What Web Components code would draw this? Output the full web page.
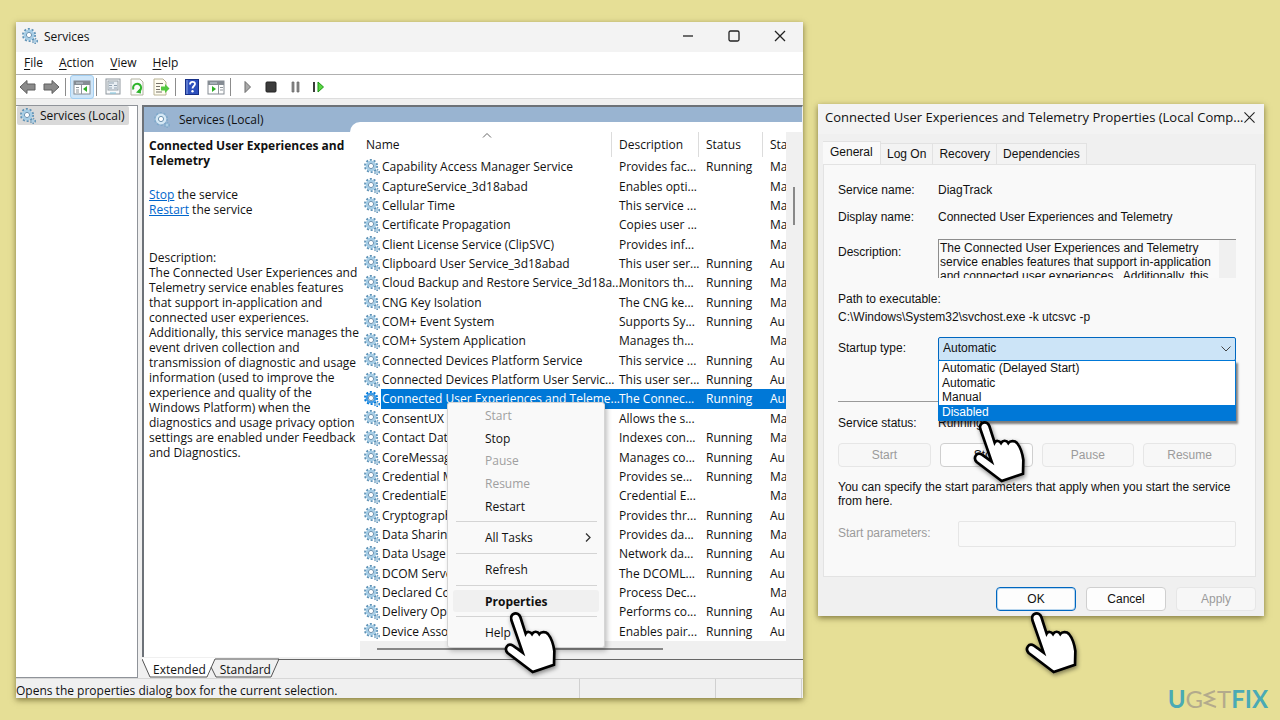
<!DOCTYPE html>
<html lang="en">
<head>
<meta charset="utf-8">
<title>Services</title>
<style>
body { margin: 0; background: #e6df96; }
</style>
</head>
<body>
<desktop-scene>
  <services-window></services-window>
  <properties-dialog></properties-dialog>
</desktop-scene>
<script>
const define = (name, html, setup) => {
  const template = document.createElement('template');
  template.innerHTML = `<style>*{box-sizing:border-box}button{font:inherit;color:inherit;background:none;border:0;padding:0;margin:0}</style>` + html;
  customElements.define(name, class extends HTMLElement {
    constructor() {
      super();
      this.attachShadow({ mode: 'open' }).append(template.content.cloneNode(true));
      if (setup) setup(this.shadowRoot, this);
    }
  });
};

/* ---------- small graphics ---------- */
define('gear-icon', `
<style>:host{display:block;width:16px;height:16px} svg{display:block;width:100%;height:100%}</style>
<svg viewBox="0 0 16 16" aria-hidden="true">
  <circle cx="7" cy="7" r="6" fill="none" stroke="var(--teeth,#5f92b6)" stroke-width="2" stroke-dasharray="2 1.77"/>
  <circle cx="7" cy="7" r="4.2" fill="#eaf4fb" stroke="var(--ring,#a5cde6)" stroke-width="2.4"/>
  <circle cx="7" cy="7" r="2.6" fill="#fff" stroke="#6b92b0" stroke-width="1"/>
  <circle cx="13" cy="13" r="2.2" fill="none" stroke="var(--teeth,#5f92b6)" stroke-width="1.6" stroke-dasharray="1.3 1"/>
  <circle cx="13" cy="13" r="1.2" fill="#d8eaf5" stroke="#8fbbd8" stroke-width=".8"/>
</svg>`);

define('hand-cursor', `
<style>:host{display:block;width:54px;height:62px;pointer-events:none} svg{display:block;width:100%;height:100%;overflow:visible;filter:drop-shadow(1px 2px 2px rgba(0,0,0,.45))}</style>
<svg viewBox="27 30 162 186" aria-hidden="true">
  <path d="M52 57 C46 36 73 30 79 48 L95 98 C99 91 109 91 114 99 C119 90 131 90 136 99 C141 92 155 91 162 99 C171 110 178 128 181 150 L180 191 L116 213 L41 156 C29 143 41 125 57 134 L86 155 Z" fill="#fff" stroke="#000" stroke-width="8" stroke-linejoin="miter"/>
</svg>`);

const TOOL_ART = {
  back: `<path d="M1 9 8 2.500V6h8v6H8v3.500Z" fill="#8b8b8b" stroke="#5e5e5e"/>`,
  forward: `<path d="M17 9 10 2.500V6H2v6h8v3.500Z" fill="#8b8b8b" stroke="#5e5e5e"/>`,
  tree: `<rect x="1" y="3" width="16" height="13" fill="#fff" stroke="#858c93"/><path d="M1 3h16v4H1z" fill="#858c93"/><path d="M3 5h7" stroke="#c9d3dc"/><path d="M8.500 7v9M3 9.500h3M3 12h3M3 14h3" stroke="#8e959b"/><path d="M14 8v6l-4-3z" fill="#2fae26"/>`,
  detail: `<rect x="2" y="1" width="14" height="15" fill="#f7f9fb" stroke="#8f979e"/><rect x="4" y="3" width="10" height="9" fill="#e8eef3" stroke="#9aa3aa"/><path d="M5 5h5M5 7.500h3M5 10h3M10 7.500h3M10 10h3" stroke="#8fa0af"/><path d="M6 15h6" stroke="#7cc4df"/>`,
  refresh: `<path d="M3 1h9l3 3v13H3z" fill="#fcfcfc" stroke="#b3b3a0"/><path d="M5.500 11.500a4 4 0 1 1 5 2" fill="none" stroke="#2fb42c" stroke-width="2"/><path d="m12.500 10 .5 5.500-5-1z" fill="#2fb42c"/>`,
  export: `<path d="M2 1h9l3 3v13H2z" fill="#fffdf0" stroke="#b8b294"/><path d="M4 5.500h7M4 8.500h4M4 11.500h4M4 14h6" stroke="#77736a"/><path d="M9 8.500h4V6l4.500 4.500L13 15v-2.500H9z" fill="#53c83f"/>`,
  help: `<rect x="2.500" y="1.500" width="13" height="15" fill="#2d50bd" stroke="#173087"/><path d="M4 2v14" stroke="#8ea5e2"/><path d="M7 6.500c0-3.500 5-3.500 5-.5 0 2-2.500 2-2.500 4.500" fill="none" stroke="#fff" stroke-width="1.800"/><circle cx="9.500" cy="13.300" r="1.200" fill="#fff"/>`,
  action: `<rect x="1" y="3" width="16" height="13" fill="#fff" stroke="#858c93"/><path d="M1 3h16v4H1z" fill="#858c93"/><path d="M3 5h7" stroke="#c9d3dc"/><path d="M11.500 7v9M13 9.500h3M13 12h3" stroke="#8e959b"/><path d="M5 8v6l4-3z" fill="#2fae26"/>`,
  play: `<path d="m7 3.500 5.500 5.500L7 14.500z" fill="#aaa" stroke="#6c6c6c"/>`,
  stop: `<rect x="4" y="4" width="10" height="10" rx="1" fill="#3c3c3c" stroke="#222"/>`,
  pause: `<path d="M6 4h2v10h-2zM11 4h2v10h-2z" fill="#8d8d8d" stroke="#666" stroke-width=".7"/>`,
  restart: `<path d="M4 4h2v10H4z" fill="#3a3a3a"/><path d="m9 4 5.500 5-5.500 5z" fill="#5ad842" stroke="#1c9416"/>`
};
define('tool-button', `
<style>
:host{display:block;width:24px;height:24px}
:host([slim]){width:23px}
:host([pressed]) button{background:#cfe6f9;border:1px solid #a3cff2;border-radius:3px}
button{display:grid;place-items:center;width:100%;height:100%}
svg{display:block;width:18px;height:18px}
</style><button type="button"><svg viewBox="0 0 18 18" aria-hidden="true"></svg></button>`, (root, host) => {
  root.querySelector('svg').innerHTML = TOOL_ART[host.getAttribute('art')];
  root.querySelector('button').setAttribute('aria-label', host.getAttribute('art'));
});

/* ---------- desktop ---------- */
define('desktop-scene', `
<style>
:host{position:relative;display:grid;grid-template-columns:minmax(0,787fr) minmax(0,446fr);gap:15px;align-items:start;
 min-height:100vh;box-sizing:border-box;padding:22px 16px;font:12px/15px "Open Sans","Noto Sans",sans-serif;color:#111}
.mark{position:absolute;right:12px;bottom:8px}
</style>
<slot></slot><brand-mark class="mark"></brand-mark>`);

define('brand-mark', `
<style>
:host{display:flex;align-items:center;font:24px/26px Lato,sans-serif;color:#4aaab5}
.g{color:#b3aa8c} svg{width:14px;height:18px}
b{font-weight:700}
</style><b>U</b><span class="g">G</span><svg viewBox="0 0 14 18" role="img" aria-label="E"><path d="M12 1 2 5l9 4-9 4 11 4" fill="none" stroke="#b3aa8c" stroke-width="2"/></svg><span class="g">T</span><b>FIX</b>`);

/* ---------- services console ---------- */
define('services-window', `
<style>
:host{display:flex;flex-direction:column;min-height:calc(100vh - 44px);background:#f0f0f0;box-shadow:0 2px 6px rgba(60,50,0,.6)}
.body{flex:1;display:grid;grid-template-columns:122px minmax(0,1fr);gap:4px}
</style>
<window-title></window-title><menu-bar></menu-bar><tool-bar></tool-bar>
<div class="body"><tree-pane></tree-pane><result-pane></result-pane></div>
<status-bar></status-bar>`);

define('window-title', `
<style>
:host{display:flex;align-items:center;height:30px;background:#f3f3f3;padding:0 0 2px 6px;box-sizing:border-box}
gear-icon{margin-right:6px}
h1{flex:1;margin:0;font:inherit}
button{width:46px;height:28px;display:grid;place-items:center}
svg{width:12px;height:12px;fill:none;stroke:#222;stroke-width:1.300}
</style>
<gear-icon></gear-icon><h1>Services</h1>
<button aria-label="Minimize"><svg viewBox="0 0 12 12"><path d="M1 6h10"/></svg></button>
<button aria-label="Maximize"><svg viewBox="0 0 12 12"><rect x="1" y="1" width="10" height="10" rx="1.500"/></svg></button>
<button aria-label="Close"><svg viewBox="0 0 12 12"><path d="m1 1 10 10M11 1 1 11"/></svg></button>`);

define('menu-bar', `
<style>
:host{display:flex;height:23px;background:#fff;border-bottom:1px solid #b0b0b0;box-sizing:border-box}
button{padding:0 8px 1px} u{text-underline-offset:2px}
</style>
<button><u>F</u>ile</button><button><u>A</u>ction</button><button><u>V</u>iew</button><button><u>H</u>elp</button>`);

define('tool-bar', `
<style>
:host{display:flex;align-items:center;height:24px;background:#fff;border-bottom:1px solid #ddd;margin-bottom:6px}
i{width:1px;height:18px;background:#8c8c8c;margin:0 4px 0 2px}
</style>
<tool-button art="back" slim></tool-button><tool-button art="forward"></tool-button><i></i>
<tool-button art="tree" pressed></tool-button><i></i>
<tool-button art="detail"></tool-button><tool-button art="refresh"></tool-button><tool-button art="export"></tool-button><i></i>
<tool-button art="help"></tool-button><tool-button art="action"></tool-button><i></i>
<tool-button art="play"></tool-button><tool-button art="stop"></tool-button><tool-button art="pause" slim></tool-button><tool-button art="restart"></tool-button>`);

define('tree-pane', `
<style>
:host{display:block;background:#fff;border:solid #8f9399;border-width:1px 1px 1px 0}
div{display:inline-flex;align-items:center;gap:4px;height:19px;padding:0 4px 0 3px;margin-left:1px;background:#d9d9d9;border-radius:2px;white-space:nowrap}
</style><div><gear-icon></gear-icon><span>Services (Local)</span></div>`);

define('result-pane', `
<style>
:host{display:flex;flex-direction:column;min-width:0}
.frame{flex:1;display:flex;flex-direction:column;background:#fff;border:solid #6d7278;border-width:2px 1px 0 2px;border-right-color:#f0f0f0}
.band{display:flex;height:25px;background:#99b4d1;--ring:#d4e8f5;--teeth:#7fa9ca}
.band div{flex:0 0 206px;display:flex;align-items:center;gap:9px;padding-left:10px}
.band i{flex:1;align-self:flex-end;height:10px;background:#fff;border-top-left-radius:10px}
.split{flex:1;display:grid;grid-template-columns:216px minmax(0,1fr)}
</style>
<div class="frame">
 <div class="band"><div><gear-icon></gear-icon><span>Services (Local)</span></div><i></i></div>
 <div class="split"><service-summary></service-summary><service-list></service-list></div>
</div>
<view-tabs></view-tabs>`);

define('service-summary', `
<style>
:host{display:block;padding:6px 0 0 5px;white-space:nowrap}
h2{font:inherit;font-weight:700;margin:0 0 19px}
p{margin:0} a{color:#0066cc}
.text{margin-top:33px}
</style>
<h2>Connected User Experiences and<br>Telemetry</h2>
<p><a href="#stop">Stop</a> the service</p><p><a href="#restart">Restart</a> the service</p>
<p class="text">Description:<br>The Connected User Experiences and<br>Telemetry service enables features<br>that support in-application and<br>connected user experiences.<br>Additionally, this service manages the<br>event driven collection and<br>transmission of diagnostic and usage<br>information (used to improve the<br>experience and quality of the<br>Windows Platform) when the<br>diagnostics and usage privacy option<br>settings are enabled under Feedback<br>and Diagnostics.</p>`);

const SERVICES = [
  ['Capability Access Manager Service', 'Provides fac...', 'Running', 'Ma'],
  ['CaptureService_3d18abad', 'Enables opti...', '', 'Ma'],
  ['Cellular Time', 'This service ...', '', 'Ma'],
  ['Certificate Propagation', 'Copies user ...', '', 'Ma'],
  ['Client License Service (ClipSVC)', 'Provides inf...', '', 'Ma'],
  ['Clipboard User Service_3d18abad', 'This user ser...', 'Running', 'Au'],
  ['Cloud Backup and Restore Service_3d18a...', 'Monitors th...', 'Running', 'Ma'],
  ['CNG Key Isolation', 'The CNG ke...', 'Running', 'Ma'],
  ['COM+ Event System', 'Supports Sy...', 'Running', 'Au'],
  ['COM+ System Application', 'Manages th...', '', 'Ma'],
  ['Connected Devices Platform Service', 'This service ...', 'Running', 'Au'],
  ['Connected Devices Platform User Servic...', 'This user ser...', 'Running', 'Au'],
  ['Connected User Experiences and Teleme...', 'The Connec...', 'Running', 'Au'],
  ['ConsentUX', 'Allows the s...', '', 'Ma'],
  ['Contact Data', 'Indexes con...', 'Running', 'Ma'],
  ['CoreMessaging', 'Manages co...', 'Running', 'Au'],
  ['Credential Manager', 'Provides se...', 'Running', 'Ma'],
  ['CredentialEn', 'Credential E...', '', 'Ma'],
  ['Cryptographic', 'Provides thr...', 'Running', 'Au'],
  ['Data Sharing', 'Provides da...', 'Running', 'Ma'],
  ['Data Usage', 'Network da...', 'Running', 'Au'],
  ['DCOM Server', 'The DCOML...', 'Running', 'Au'],
  ['Declared Co', 'Process Dec...', '', 'Ma'],
  ['Delivery Opt', 'Performs co...', 'Running', 'Au'],
  ['Device Asso', 'Enables pair...', 'Running', 'Au']
];
define('service-list', `
<style>
:host{position:relative;display:grid;grid-template-columns:minmax(0,1fr) 16px;grid-template-rows:minmax(0,1fr) 16px}
.view{overflow:hidden}
table{width:100%;height:509px;table-layout:fixed;border-collapse:separate;border-spacing:0}
td,th{padding:0 0 0 7px;text-align:left;font-weight:400;white-space:nowrap}
thead tr{height:25px}
th{border-right:1px solid #dcdcdc} th:last-child{border:0}
th:first-child{padding-left:6px;position:relative}
th svg{position:absolute;top:1px;left:122px;width:10px;height:5px;fill:none;stroke:#666}
td:nth-child(1){padding-left:4px} td:nth-child(2){padding-left:1px}
[aria-selected] td:not(:first-child){background:#0078d7;color:#fff}
[aria-selected] td:nth-child(3){position:relative;z-index:-1}
[aria-selected]{--teeth:#0078d7;--ring:#3f9be6}
.v,.h{background:#f0f0f0;display:flex}
.v{justify-content:center;padding-top:55px} .v i{width:2px;height:38px;background:#888}
.h{grid-column:1/3;align-items:center;padding-left:17px} .h i{width:286px;height:2px;background:#888}
context-menu{position:absolute;left:87px;top:270px}
</style>
<div class="view"><table>
<colgroup><col style="width:21px"><col><col style="width:87px"><col style="width:64px"><col style="width:23px"></colgroup>
<thead><tr><th colspan="2">Name<svg viewBox="0 0 10 5"><path d="m1 4.500 4-4 4 4"/></svg></th><th>Description</th><th>Status</th><th>Sta</th></tr></thead><tbody></tbody></table></div>
<div class="v"><i></i></div><div class="h"><i></i></div>
<context-menu></context-menu>`, root => {
  root.querySelector('tbody').innerHTML = SERVICES.map((row, i) =>
    `<tr${i === 12 ? ' aria-selected="true"' : ''}><td><gear-icon></gear-icon></td>${row.map(c => `<td>${c}</td>`).join('')}</tr>`).join('');
  root.querySelector('.view').style.isolation = 'isolate';
});

define('context-menu', `
<style>
:host{display:flex;flex-direction:column;width:158px;height:246px;padding:1px 5px 3px;background:#f9f9f9;border:1px solid #d5d5d5;border-radius:3px;box-shadow:2px 3px 5px rgba(0,0,0,.25);box-sizing:border-box}
button{flex:1;display:flex;align-items:center;text-align:left;padding:0 8px 0 32px;border-radius:3px}
button span{flex:1} button:disabled{color:#a0a0a0}
hr{width:141px;height:1px;margin:4px auto;border:0;background:#d4d4d4}
.on{background:#f0f0f0;font-weight:700;position:relative}
svg{width:6px;height:9px;fill:none;stroke:#333;stroke-width:1.300}
hand-cursor{position:absolute;left:50px;top:21px;z-index:1}
</style>
<button disabled>Start</button><button>Stop</button><button disabled>Pause</button><button disabled>Resume</button><button>Restart</button><hr>
<button><span>All Tasks</span><svg viewBox="0 0 6 9"><path d="m1 .5 4 4-4 4"/></svg></button><hr>
<button>Refresh</button><hr>
<button class="on">Properties<hand-cursor></hand-cursor></button><hr>
<button>Help</button>`);

define('view-tabs', `
<style>
:host{position:relative;display:flex;height:20px;margin-top:1px}
svg{position:absolute;left:0;top:0;width:140px;height:20px}
.rule{position:absolute;left:136px;right:0;top:1px;height:1px;background:#666}
button{position:relative;padding-top:2px} button:first-of-type{margin:0 14px 0 11px}
</style>
<div class="rule"></div>
<svg viewBox="0 0 140 20"><path d="M0 0h74L66 19H8z" fill="#fff"/><path d="M0 1 8 19h57L73 1h64l-8 18H74l-5-10" fill="none" stroke="#555"/></svg>
<button>Extended</button><button>Standard</button>`);

define('status-bar', `
<style>
:host{display:flex;height:20px;border-top:1px solid #d7d7d7;align-items:stretch;box-sizing:border-box}
span{border-right:1px solid #d0d0d0}
.a{flex:1;padding-top:4px;white-space:nowrap}.b{width:136px}.c{width:86px;margin-right:1px}
</style><span class="a">Opens the properties dialog box for the current selection.</span><span class="b"></span><span class="c"></span>`);

/* ---------- properties dialog ---------- */
define('properties-dialog', `
<style>
:host{display:flex;flex-direction:column;margin-top:82px;min-height:512px;box-sizing:border-box;background:#f0f0f0;box-shadow:0 2px 6px rgba(60,50,0,.6);font:12px/15px "Liberation Sans",Arial,sans-serif}
header{display:flex;align-items:center;height:30px;padding:0 10px 4px 7px;background:#f3f3f3;font:13px/18px "Open Sans","Noto Sans",sans-serif}
h1{flex:1;font:inherit;margin:0;white-space:nowrap}
header svg{display:block;width:11px;height:11px;fill:none;stroke:#222;stroke-width:1.200}
.tabs{display:flex;align-items:flex-end;margin:7px 5px 0;height:23px}
.tabs button{height:21px;border:1px solid #e2e2e2;border-left:0;border-bottom:0;padding:0 6px;background:#f3f3f3}
.tabs button.on{height:23px;padding:0 8px 1px 7px;background:#f9f9f9;width:58px;text-align:left}
general-page{flex:1;margin:0 8px 0 5px}
footer{display:flex;justify-content:flex-end;gap:10px;padding:10px 8px 5px}
push-button{width:80px}
.ok{position:relative} hand-cursor{position:absolute;left:28px;top:24px;z-index:1}
</style>
<header><h1>Connected User Experiences and Telemetry Properties (Local Comp...</h1><button aria-label="Close"><svg viewBox="0 0 12 12"><path d="m.5.5 11 11M11.500.5l-11 11"/></svg></button></header>
<div class="tabs"><button class="on">General</button><button>Log On</button><button>Recovery</button><button>Dependencies</button></div>
<general-page></general-page>
<footer><div class="ok"><push-button primary>OK</push-button><hand-cursor></hand-cursor></div><push-button>Cancel</push-button><push-button off>Apply</push-button></footer>`);

define('push-button', `
<style>
:host{display:block;height:24px}
button{width:100%;height:100%;border:1px solid #cfcfcf;border-radius:4px;background:#fdfdfd}
:host([primary]) button{border:1px solid #0067c0;box-shadow:inset 0 0 0 1px #b9d6ee}
button:disabled{color:#9b9b9b;background:#f7f7f7;border-color:#e6e6e6}
</style><button type="button"><slot></slot></button>`, (root, host) => {
  root.querySelector('button').disabled = host.hasAttribute('off');
});

define('general-page', `
<style>
:host{display:block;box-sizing:border-box;background:#f9f9f9;border:1px solid #e3e3e3;padding:12px 19px 0 14px}
.row{display:grid;grid-template-columns:100px minmax(0,1fr);align-items:center;min-height:27px}
textarea{display:block;width:100%;height:39px;padding:1px 0 0 1px;resize:none;border:solid #8d8d8d;border-width:1px 0 0 1px;background:#fafafa linear-gradient(#f0f0f0,#f0f0f0) right/17px 100% no-repeat;font:inherit;line-height:14px;color:inherit;overflow:hidden;outline:0}
.desc{margin-top:8px;align-items:start} .desc label{padding-top:6px}
.path{margin:12px 0 0;line-height:18px}
.combo{position:relative}
select{display:block;appearance:none;width:100%;height:24px;border:1px solid #0067c0;border-radius:2px;background:#cce4f7;padding:0 4px;font:inherit;color:inherit}
.combo svg{position:absolute;right:5px;top:9px;width:10px;height:6px;fill:none;stroke:#444}
ul{position:absolute;left:0;right:0;top:23px;height:61px;z-index:1;display:flex;flex-direction:column;margin:0;padding:0;list-style:none;border:1px solid #0078d7;background:#fff;box-shadow:2px 3px 2px rgba(0,0,0,.5)}
li{flex:1;display:flex;align-items:center;padding-left:3px;line-height:14px}
li[aria-selected]{background:#0078d7;color:#fff;position:relative}
li hand-cursor{position:absolute;left:33px;top:15px}
.start{margin-top:9px}
hr{margin:39px 0 0;height:1px;border:0;background:#9a9a9a}
.status{margin-top:8px}
.buttons{display:grid;grid-template-columns:repeat(4,minmax(0,1fr));gap:9px;margin-top:6px}
.note{margin:13px 0 0;line-height:14px;white-space:nowrap}
.params{grid-template-columns:120px minmax(0,1fr);margin-top:12px;color:#9b9b9b}
input{width:100%;height:26px;border:1px solid #e6e6e6;border-radius:2px;background:#f9f9f9}
</style>
<div class="row"><span>Service name:</span><span>DiagTrack</span></div>
<div class="row"><span>Display name:</span><span>Connected User Experiences and Telemetry</span></div>
<div class="row desc"><label for="d">Description:</label><textarea id="d" readonly>The Connected User Experiences and Telemetry
service enables features that support in-application
and connected user experiences.  Additionally, this</textarea></div>
<p class="path">Path to executable:<br>C:\\Windows\\System32\\svchost.exe -k utcsvc -p</p>
<div class="row start"><label for="s">Startup type:</label><div class="combo"><select id="s"><option>Automatic</option></select><svg viewBox="0 0 10 6"><path d="m.5.5 4.500 4.500L9.500.5"/></svg>
<ul role="listbox"><li role="option">Automatic (Delayed Start)</li><li role="option">Automatic</li><li role="option">Manual</li><li role="option" aria-selected="true">Disabled<hand-cursor></hand-cursor></li></ul></div></div>
<hr>
<div class="row status"><span>Service status:</span><span>Running</span></div>
<div class="buttons"><push-button off>Start</push-button><push-button>Stop</push-button><push-button off>Pause</push-button><push-button off>Resume</push-button></div>
<p class="note">You can specify the start parameters that apply when you start the service<br>from here.</p>
<div class="row params"><label for="p">Start parameters:</label><input id="p" disabled></div>`);
</script>
</body>
</html>
